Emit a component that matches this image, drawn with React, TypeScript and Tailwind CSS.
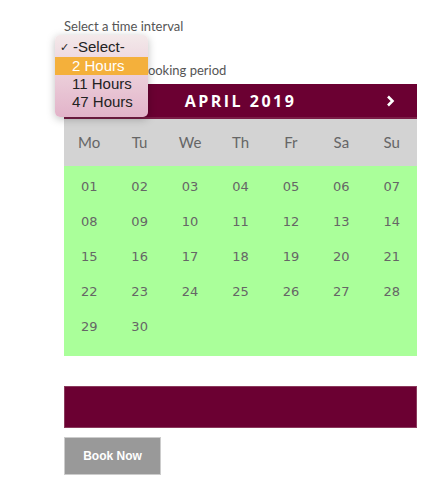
const weekdays = ["Mo", "Tu", "We", "Th", "Fr", "Sa", "Su"];
const days = Array.from({ length: 30 }, (_, i) => String(i + 1).padStart(2, "0"));
const options = ["2 Hours", "11 Hours", "47 Hours"];

export default function App() {
  return (
    <div className="min-h-[500px] bg-white pl-[64px] pr-[21px] pt-[17px] font-['Lato',sans-serif]">
      {/* Time interval */}
      <div className="relative">
        <div className="text-[13px] leading-[18px] text-[#555]">Select a time interval</div>
        <div className="h-[26px]" />
        <div className="text-[13px] leading-[18px] text-[#555]">Please select booking period</div>

        {/* open select menu */}
        <div className="absolute left-[-9px] top-[18px] z-10 w-[93px] rounded-[5px] bg-gradient-to-b from-[#f3e9ea] to-[#e2b3c9] pt-[3px] pb-[6px] shadow-[0_2px_8px_rgba(0,0,0,0.25)] font-['Liberation_Sans',sans-serif] text-[15px] text-[#222]">
          <div className="flex h-[19px] items-center">
            <span className="w-[18px] pl-[5px] text-[11px]">✓</span>
            <span>-Select-</span>
          </div>
          {options.map((o, i) => (
            <div
              key={o}
              className={`flex h-[18px] items-center pl-[17px] ${i === 0 ? "bg-[#f4b03b] text-white" : ""}`}
            >
              {o}
            </div>
          ))}
        </div>
      </div>

      {/* Calendar */}
      <div className="mt-[5px] w-[353px]">
        <div className="relative flex h-[35px] items-center justify-center bg-[#6b0032] border-b-2 border-[#7a1e47]">
          <span className="text-[16px] font-bold tracking-[2.5px] text-white font-['Open_Sans',sans-serif]">APRIL 2019</span>
          <svg className="absolute right-[22px] top-[11px]" width="9" height="12" viewBox="0 0 9 12">
            <path d="M2 1.5 L6.5 6 L2 10.5" fill="none" stroke="white" strokeWidth="2.6" />
          </svg>
        </div>
        <div className="grid h-[47px] grid-cols-7 items-center bg-[#d3d3d3] text-[15px] text-[#666]">
          {weekdays.map((d) => (
            <div key={d} className="text-center">{d}</div>
          ))}
        </div>
        <div className="grid grid-cols-7 grid-rows-[repeat(5,35px)] items-center bg-[#aaff9a] pt-[3px] pb-[12px] font-['DejaVu_Sans',sans-serif] text-[13px] text-[#666]">
          {days.map((d) => (
            <div key={d} className="text-center">{d}</div>
          ))}
        </div>
      </div>

      <div className="mt-[30px] h-[42px] w-[353px] bg-[#6b0032] border border-[#8a3a5c]" />

      <button className="mt-[9px] flex h-[38px] w-[97px] items-center justify-center border border-[#ccc] bg-[#999] font-['Liberation_Sans',sans-serif] text-[12px] font-bold text-white">
        Book Now
      </button>
    </div>
  );
}
